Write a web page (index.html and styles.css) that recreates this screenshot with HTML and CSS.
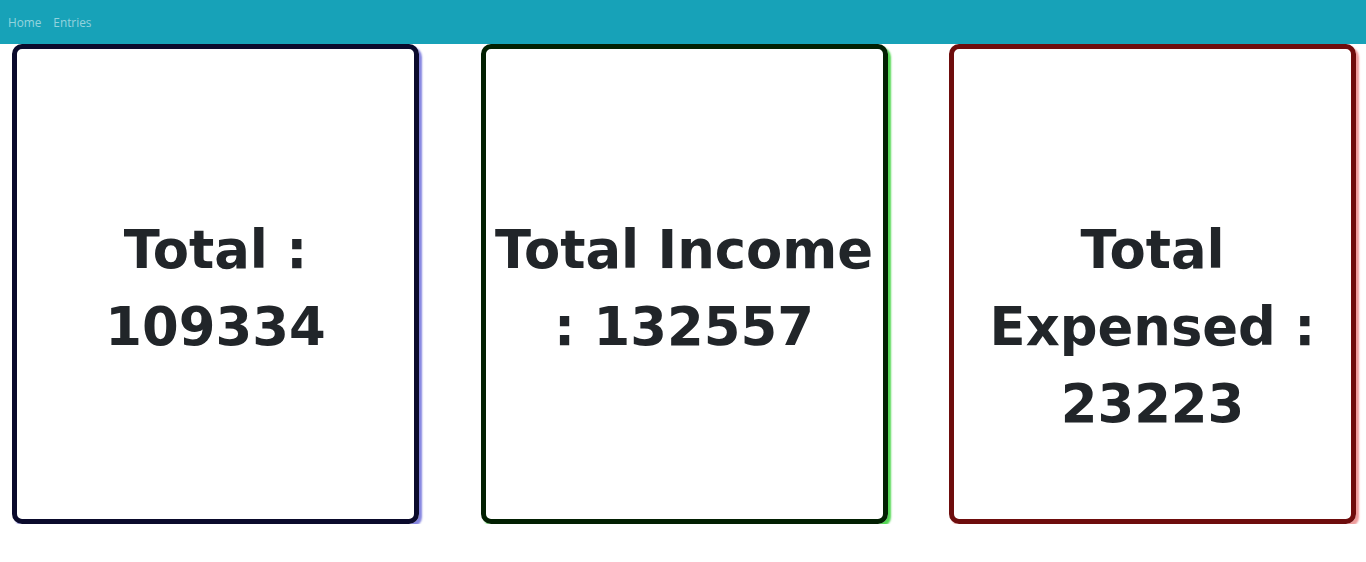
FILE: index.html
```html
<!DOCTYPE html>
<html lang="en">
<head>
<meta charset="utf-8">
<title>Dashboard</title>
<link rel="stylesheet" href="styles.css">
</head>
<body>
<nav class="navbar">
  <a class="nav-link" href="#">Home</a>
  <a class="nav-link" href="#">Entries</a>
</nav>
<main class="cards">
  <section class="card card-total">
    <h1 class="card-text">Total : 109334</h1>
  </section>
  <section class="card card-income">
    <h1 class="card-text">Total Income : 132557</h1>
  </section>
  <section class="card card-expense">
    <h1 class="card-text">Total Expensed : 23223</h1>
  </section>
</main>
</body>
</html>
```
FILE: styles.css
```css
* { box-sizing: border-box; }
html, body { margin: 0; padding: 0; background: #fff; }
body { font-family: "Open Sans", "Noto Sans", sans-serif; }

.navbar {
  height: 44px;
  background: #17a2b8;
  display: flex;
  align-items: center;
  gap: 12px;
  padding: 0 8px;
}
.nav-link {
  font-size: 11.8px;
  color: rgba(255, 255, 255, 0.55);
  text-decoration: none;
}

.cards {
  display: flex;
  gap: 61.5px;
  padding-left: 12px;
}
.card {
  width: 407px;
  height: 480px;
  border: 5px solid;
  border-radius: 10px;
  padding: 162px 4px 0;
  text-align: center;
}
.card-total { border-color: #0a0a2c; box-shadow: 3px 3px 2px 0 #8585e0; }
.card-income { border-color: #022002; box-shadow: 3px 3px 2px 0 #55d855; }
.card-expense { border-color: #6e0d0d; box-shadow: 3px 3px 2px 0 #ee9c9c; }

.card-text {
  margin: 0;
  font-family: "DejaVu Sans", Verdana, sans-serif;
  font-weight: bold;
  font-size: 52.8px;
  line-height: 77px;
  color: #212529;
}
```
